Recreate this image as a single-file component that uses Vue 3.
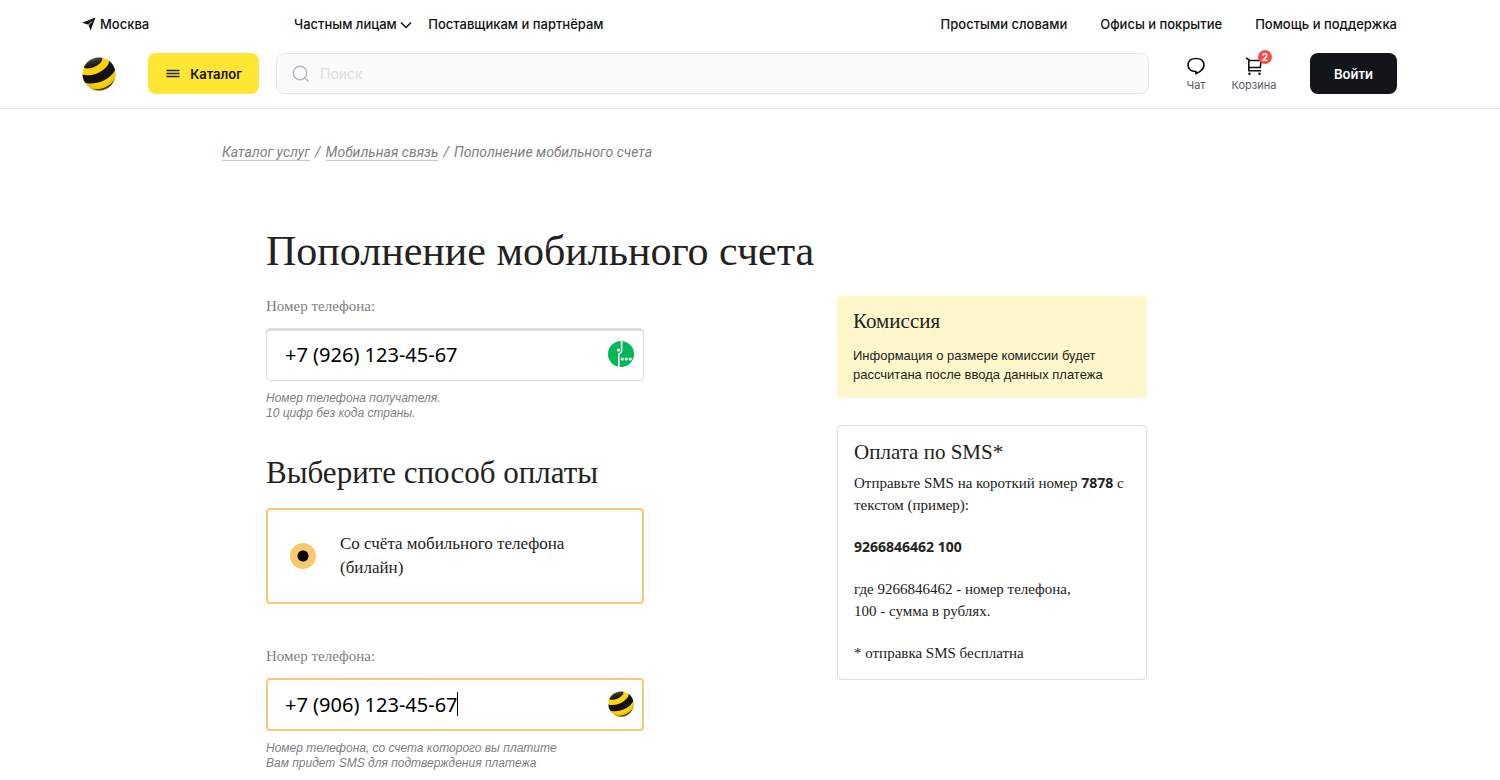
<script setup>
import { ref, h } from 'vue'

const search = ref('')
const recipient = ref('+7 (926) 123-45-67')
const payer = ref('+7 (906) 123-45-67')
const method = ref('mobile')

const helpLinks = ['Простыми словами', 'Офисы и покрытие', 'Помощь и поддержка']

let ballCount = 0
const BeeBall = () => {
  const id = 'ball' + ballCount++
  return h('svg', { viewBox: '0 0 34 34', width: '100%', height: '100%', 'aria-hidden': 'true' }, [
    h('defs', [
      h('clipPath', { id }, [h('circle', { cx: 17, cy: 17, r: 16.5 })]),
      h('radialGradient', { id: id + 'g', cx: '45%', cy: '40%', r: '62%' }, [
        h('stop', { offset: '0.7', 'stop-color': '#000', 'stop-opacity': 0 }),
        h('stop', { offset: '1', 'stop-color': '#000', 'stop-opacity': 0.15 }),
      ]),
      h('linearGradient', { id: id + 'k', x1: 0.2, y1: 0, x2: 0.7, y2: 1 }, [
        h('stop', { offset: '0', 'stop-color': '#777' }),
        h('stop', { offset: '0.5', 'stop-color': '#2c2c2c' }),
        h('stop', { offset: '1', 'stop-color': '#000' }),
      ]),
    ]),
    h('g', { 'clip-path': `url(#${id})` }, [
      h('rect', { width: 34, height: 34, fill: '#ffd20a' }),
      h('path', { d: 'M0 10C4 12.500 10 11.500 15 8.500C19 6 21 3 20 0H3Z', fill: `url(#${id}k)` }),
      h('path', { d: 'M0 17.500C7 19.500 15 17.500 21 13C26 9 28 6 26.500 2L34 7V11C32 16.500 27 21 21 24C14 27 6 27.500 0 24.500Z', fill: '#111' }),
      h('path', { d: 'M8 31.500C16 33 24 30.500 29 26.500C32 24 33.500 21 34 18V34H8Z', fill: '#4a4312' }),
      h('path', { d: 'M8 30C18 31.500 28 26.500 34 16L34 20C29 28 22 32.500 12 32.500Z', fill: '#ffd20a' }),
      h('rect', { width: 34, height: 34, fill: `url(#${id}g)` }),
    ]),
  ])
}
</script>

<template>
  <div class="page">
    <header class="header">
      <div class="top">
        <a class="city" href="#">
          <svg width="14" height="14" viewBox="0 0 14 14" aria-hidden="true"><path d="M13.500 0.500L8.500 13.500L6.500 7.800L0 5.800Z" fill="#111" /><path d="M6.500 8L10 4.500" stroke="#fff" stroke-width="0.900" /></svg>
          <span>Москва</span>
        </a>
        <nav class="audience" aria-label="Разделы">
          <a href="#">Частным лицам
            <svg width="12" height="8" viewBox="0 0 12 8" aria-hidden="true"><path d="M1 1.500L6 6.500L11 1.500" fill="none" stroke="#111" stroke-width="1.500" /></svg>
          </a>
          <a href="#">Поставщикам и партнёрам</a>
        </nav>
        <nav class="help" aria-label="Помощь">
          <a v-for="item in helpLinks" :key="item" href="#">{{ item }}</a>
        </nav>
      </div>
      <div class="bar">
        <a class="logo" href="#" aria-label="билайн"><BeeBall /></a>
        <button class="catalog" type="button">
          <svg width="14" height="10" viewBox="0 0 14 10" aria-hidden="true"><path d="M0.500 1.500H13.500M0.500 4.500H13.500M0.500 7.500H13.500" stroke="#222" stroke-width="1.600" /></svg>
          <span>Каталог</span>
        </button>
        <label class="search">
          <svg width="18" height="18" viewBox="0 0 18 18" aria-hidden="true"><circle cx="8" cy="8" r="6.700" fill="none" stroke="#b6b6c4" stroke-width="1.400" /><path d="M13 13L16.500 16.500" stroke="#b6b6c4" stroke-width="1.400" /></svg>
          <input v-model="search" type="search" placeholder="Поиск" aria-label="Поиск">
        </label>
        <a class="action" href="#">
          <svg width="20" height="20" viewBox="0 0 20 20" aria-hidden="true"><path d="M9.500 15.500C4.800 15.500 2 12.800 2 9C2 5 5.200 2.500 10 2.500C14.800 2.500 18 5 18 9C18 13.200 14.500 15.700 10 17.700V15.500Z" fill="none" stroke="#111" stroke-width="1.700" stroke-linejoin="round" /></svg>
          <span>Чат</span>
        </a>
        <a class="action cart" href="#">
          <svg width="20" height="20" viewBox="0 0 20 20" aria-hidden="true"><path d="M2 2L4.800 3.500V14.800H17M4.800 4.500H17L16.300 11.500H5" fill="none" stroke="#111" stroke-width="1.600" /><circle cx="5.500" cy="17.700" r="1.200" fill="#111" /><circle cx="15.500" cy="17.700" r="1.200" fill="#111" /></svg>
          <span>Корзина</span>
          <b class="badge">2</b>
        </a>
        <button class="login" type="button">Войти</button>
      </div>
    </header>

    <main class="main">
      <nav class="crumbs" aria-label="Навигация">
        <a href="#">Каталог услуг</a><i>/</i><a href="#">Мобильная связь</a><i>/</i><span>Пополнение мобильного счета</span>
      </nav>
      <div class="content">
        <h1>Пополнение мобильного счета</h1>
        <div class="columns">
          <form class="form">
            <label class="caption" for="recipient">Номер телефона:</label>
            <div class="field">
              <input id="recipient" v-model="recipient" type="tel">
              <svg class="operator" viewBox="0 0 26 26" aria-hidden="true"><circle cx="13" cy="13" r="13" fill="#00b956" /><path d="M13.600 0V9.500Q13.600 11.500 12.200 12Q10.800 12.500 10.800 14V26" fill="none" stroke="#fff" stroke-width="1.600" /><circle cx="10.500" cy="9" r="1.600" fill="#fff" /><circle cx="14.200" cy="18" r="1.600" fill="#fff" /><circle cx="18.200" cy="18" r="1.600" fill="#fff" /><circle cx="22.200" cy="18" r="1.600" fill="#fff" /></svg>
            </div>
            <p class="hint">Номер телефона получателя.<br>10 цифр без кода страны.</p>

            <h2>Выберите способ оплаты</h2>
            <label class="method">
              <input v-model="method" type="radio" name="method" value="mobile">
              <span>Со счёта мобильного телефона (билайн)</span>
            </label>

            <label class="caption" for="payer">Номер телефона:</label>
            <div class="field active">
              <input id="payer" v-model="payer" type="tel">
              <span class="caret"></span>
              <span class="operator"><BeeBall /></span>
            </div>
            <p class="hint">Номер телефона, со счета которого вы платите<br>Вам придет SMS для подтверждения платежа</p>
          </form>

          <aside class="side">
            <section class="fee">
              <h3>Комиссия</h3>
              <p>Информация о размере комиссии будет рассчитана после ввода данных платежа</p>
            </section>
            <section class="sms">
              <h3>Оплата по SMS*</h3>
              <p>Отправьте SMS на короткий номер <b>7878</b> с<br>текстом (пример):</p>
              <p><b>9266846462 100</b></p>
              <p>где 9266846462 - номер телефона,<br>100 - сумма в рублях.</p>
              <p>* отправка SMS бесплатна</p>
            </section>
          </aside>
        </div>
      </div>
    </main>
  </div>
</template>

<style>
body { background: #fff; }
</style>

<style scoped>
.page { font-family: "Liberation Serif", serif; color: #222; }
.page * { box-sizing: border-box; }
a { color: inherit; text-decoration: none; }
h1, h2, h3, p { margin: 0; font-weight: 400; }
button, input { font: inherit; }

.header { padding: 14px 103px 14px 82px; border-bottom: 1px solid #e4e4e4; font-family: Inter, sans-serif; color: #111; }
.top { display: flex; align-items: center; height: 20px; font-size: 13px; font-weight: 500; white-space: nowrap; }
.city { display: flex; align-items: center; gap: 4px; width: 212px; }
.audience { display: flex; gap: 16px; }
.audience svg { vertical-align: middle; }
.help { display: flex; gap: 33px; margin-left: auto; }
.bar { display: flex; align-items: center; height: 41px; margin-top: 19px; }
.logo { width: 34px; height: 34px; margin-right: 32px; }
.logo svg, .operator svg { display: block; }
.catalog { display: flex; align-items: center; justify-content: space-between; width: 111px; height: 41px; padding: 0 17px 0 18px; border: 0; border-radius: 8px; background: #ffe632; color: #111; font-size: 13px; font-weight: 600; }
.search { display: flex; align-items: center; flex: 1; gap: 10px; height: 41px; margin: 0 31px 0 17px; padding: 0 15px; border: 1px solid #e6e6e8; border-radius: 8px; background: #fbfbfb; }
.search input { flex: 1; min-width: 0; padding: 0; border: 0; outline: 0; background: transparent; font-size: 14px; }
.search input::placeholder { color: #dcdce2; opacity: 1; }
.action { position: relative; display: flex; flex-direction: column; align-items: center; gap: 2px; width: 32px; font-size: 11px; line-height: 14px; color: #555b66; }
.cart { width: 46px; margin: 0 33px 0 19px; }
.badge { position: absolute; top: -6px; right: 5px; width: 14px; height: 14px; border-radius: 50%; background: #fa4b4b; color: #fff; font-size: 10px; line-height: 14px; text-align: center; }
.login { width: 87px; height: 41px; padding: 0; border: 0; border-radius: 8px; background: #12161b; color: #fff; font-size: 13px; font-weight: 600; }

.main { padding: 35px 103px 0 222px; }
.crumbs { font: italic 14px/16px Roboto, sans-serif; color: #808080; }
.crumbs a { display: inline-block; border-bottom: 1px solid #ccc; }
.crumbs i { margin: 0 5px; }
.content { padding: 64px 0 0 44px; }
h1 { font-size: 42px; line-height: 52px; }
.columns { display: flex; justify-content: space-between; align-items: flex-start; max-width: 881px; margin-top: 19px; }
.form { width: 378px; }
.caption { display: block; font-size: 15px; line-height: 20px; color: #808080; }
.field { position: relative; margin-top: 12px; }
.field input { display: block; width: 100%; height: 53px; padding: 0 60px 0 18px; border: 1px solid #dcdcdc; border-radius: 4px; outline: 0; background: #fff; color: #000; font-family: "Noto Sans", sans-serif; font-size: 20px; box-shadow: inset 0 2px 1px #dcdcdc; }
.field.active input { padding-left: 17px; border: 2px solid #fac86e; box-shadow: none; }
.operator { position: absolute; top: 13px; right: 10px; width: 26px; height: 26px; }
.caret { position: absolute; top: 14px; left: 191px; width: 1px; height: 24px; background: #000; }
.hint { margin-top: 10px; font: italic 12px/15px "Liberation Sans", sans-serif; color: #808080; }
h2 { margin-top: 32px; font-size: 31px; line-height: 40px; }
.method { display: flex; align-items: center; gap: 24px; height: 96px; margin: 15px 0 42px; padding: 0 40px 0 22px; border: 2px solid #fac86e; border-radius: 4px; font-size: 17px; line-height: 24px; }
.method input { appearance: none; flex: none; width: 26px; height: 26px; margin: 0; border-radius: 50%; background: radial-gradient(circle, #000 5px, #fac86e 6px); }

.side { width: 310px; }
.fee { padding: 12px 16px 14px; border-radius: 4px; background: #fff6cc; }
h3 { font-size: 21px; line-height: 26px; }
.fee p { margin-top: 12px; font: 13px/19px "Liberation Sans", sans-serif; }
.sms { margin-top: 27px; padding: 13px 16px 15px; border: 1px solid #e0e0e0; border-radius: 4px; font-size: 15px; line-height: 22px; }
.sms p + p { margin-top: 20px; }
.sms h3 { margin-bottom: 7px; }
.sms b { font-family: "Noto Sans", sans-serif; font-size: 14px; }
</style>
